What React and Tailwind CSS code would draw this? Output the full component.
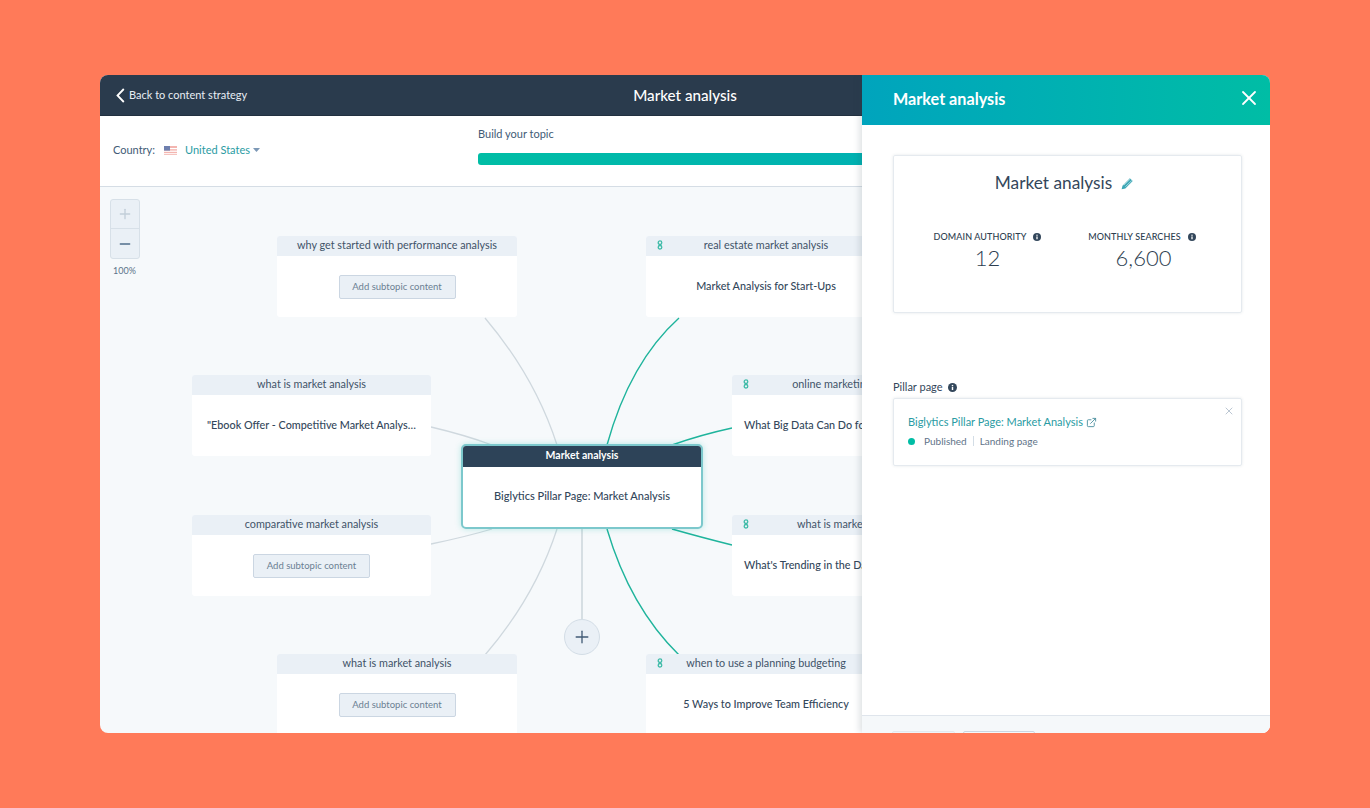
import React from "react";
import { X, Plus, Minus, ExternalLink } from "lucide-react";

const nodes = [
  { x: 177, y: 49, w: 240, title: "why get started with performance analysis", add: true },
  { x: 546, y: 49, w: 240, title: "real estate market analysis", body: "Market Analysis for Start-Ups", link: true },
  { x: 92, y: 188, w: 239, title: "what is market analysis", body: "\"Ebook Offer - Competitive Market Analys…" },
  { x: 632, y: 188, w: 239, title: "online marketing analysis", body: "What Big Data Can Do for You", link: true, start: true },
  { x: 92, y: 328, w: 239, title: "comparative market analysis", add: true },
  { x: 632, y: 328, w: 239, title: "what is market analysis", body: "What's Trending in the Data", link: true, start: true },
  { x: 177, y: 467, w: 240, title: "what is market analysis", add: true },
  { x: 546, y: 467, w: 240, title: "when to use a planning budgeting", body: "5 Ways to Improve Team Efficiency", link: true },
];

function LinkGlyph() {
  return (
    <svg width="6" height="10" viewBox="0 0 6 10" fill="none" stroke="#3fbba8" strokeWidth="1.3">
      <circle cx="3" cy="2.7" r="1.8" />
      <circle cx="3" cy="7.3" r="1.8" />
    </svg>
  );
}

function Info({ size = 9 }) {
  return (
    <svg width={size} height={size} viewBox="0 0 10 10" className="shrink-0">
      <circle cx="5" cy="5" r="5" fill="#33475b" />
      <rect x="4.2" y="4.3" width="1.6" height="3.5" fill="#fff" />
      <rect x="4.2" y="2.1" width="1.6" height="1.4" fill="#fff" />
    </svg>
  );
}

function Node({ n }) {
  return (
    <div className="absolute rounded-[3px] bg-white overflow-hidden" style={{ left: n.x, top: n.y, width: n.w, height: 81 }}>
      <div className="relative h-[20px] pb-[1px] bg-[#eaf0f6] flex items-center justify-center text-[10.8px] text-[#3f5368]">
        {n.link && (
          <span className="absolute left-[11px] top-[4px] flex">
            <LinkGlyph />
          </span>
        )}
        <span className="whitespace-nowrap">{n.title}</span>
      </div>
      <div className={n.start ? "h-[61px] flex items-center justify-start pl-[12px]" : "h-[61px] flex items-center justify-center"}>
        {n.add ? (
          <button className="h-[24px] w-[117px] pt-[1px] rounded-[2px] border border-[#cbd6e2] bg-[#eaf0f6] text-[9.5px] text-[#6b7f93]">
            Add subtopic content
          </button>
        ) : (
          <span className="whitespace-nowrap text-[10.8px] font-medium text-[#33475b]">{n.body}</span>
        )}
      </div>
    </div>
  );
}

export default function App() {
  return (
    <div className="h-[808px] w-full bg-[#ff7a59] flex items-center justify-center" style={{ fontFamily: "Lato, 'Noto Sans', sans-serif" }}>
      <div className="relative w-[1170px] h-[658px] rounded-[8px] overflow-hidden bg-[#f6f9fb] flex flex-col">
        <header className="relative h-[41px] shrink-0 bg-[#2a3b4d] flex items-center border-b border-[#22303f] text-white">
          <svg width="9" height="15" viewBox="0 0 9 15" fill="none" stroke="#fff" strokeWidth="1.8" className="ml-[16px]">
            <path d="M7.8 1 1.5 7.5 7.8 14" />
          </svg>
          <span className="ml-[4px] text-[11px] text-[#e8eef4]">Back to content strategy</span>
          <span className="absolute left-0 right-0 text-center text-[15.2px] font-medium">Market analysis</span>
        </header>

        <div className="h-[71px] shrink-0 bg-white border-b border-[#d5dde5] flex">
          <div className="w-[378px] shrink-0 pl-[13px] pb-[2px] flex items-center text-[11px]">
            <span className="text-[#425b76]">Country:</span>
            <svg width="13" height="9" viewBox="0 0 13 9" className="ml-[9px]">
              <rect width="13" height="9" fill="#f3b5b0" />
              <rect y="2" width="13" height="1.2" fill="#fff" />
              <rect y="4.6" width="13" height="1.2" fill="#fff" />
              <rect y="7.2" width="13" height="1" fill="#fff" />
              <rect width="6" height="4.6" fill="#6e7fae" />
            </svg>
            <span className="ml-[8px] text-[#2a9ba3]">United States</span>
            <svg width="7" height="4" viewBox="0 0 7 4" className="ml-[3px]">
              <path d="M0 0h7L3.5 4z" fill="#7c98b6" />
            </svg>
          </div>
          <div className="flex-1 pt-[11px]">
            <div className="text-[11px] leading-[14px] text-[#425b76]">Build your topic</div>
            <div className="mt-[12px] h-[12px] rounded-l-[3px] bg-gradient-to-r from-[#00bda5] to-[#00a4bd]" />
          </div>
        </div>

        <div className="relative flex-1">
          <svg className="absolute left-0 top-0" width="1170" height="547" fill="none">
            <g stroke="#cfd8de" strokeWidth="1.3">
              <path d="M385 131 Q435 190 457 258" />
              <path d="M331 240 Q365 248 392 258" />
              <path d="M331 357 Q365 350 392 342" />
              <path d="M457 342 Q435 410 385 468" />
              <path d="M482 342 V432" strokeWidth="1.6" />
            </g>
            <g stroke="#1fb49c" strokeWidth="1.4">
              <path d="M579 131 Q530 175 507 258" />
              <path d="M632 241 Q600 248 572 258" />
              <path d="M632 358 Q600 350 572 342" />
              <path d="M507 342 Q530 420 579 468" />
            </g>
          </svg>

          <div className="absolute left-[10px] top-[12px] w-[30px] flex flex-col items-center">
            <div className="w-[30px] rounded-[3px] border border-[#d7e0e8] bg-[#eaf0f6] flex flex-col">
              <div className="h-[29px] flex items-center justify-center border-b border-[#d7e0e8]">
                <Plus size={16} className="text-[#c2ced9]" />
              </div>
              <div className="h-[29px] flex items-center justify-center">
                <Minus size={16} strokeWidth={2.2} className="text-[#506e8c]" />
              </div>
            </div>
            <span className="mt-[5px] text-[9px] text-[#5c738a] -ml-[1px]">100%</span>
          </div>

          {nodes.map((n, i) => (
            <Node key={i} n={n} />
          ))}

          <div className="absolute left-[361px] top-[257px] w-[242px] h-[85px] rounded-[5px] border-2 border-[#7cc8cc] overflow-hidden bg-white shadow-[0_0_6px_rgba(0,189,165,0.25)]">
            <div className="h-[21px] pb-[1px] bg-[#2d4358] text-white text-[10.5px] font-bold flex items-center justify-center">Market analysis</div>
            <div className="h-[60px] pb-[2px] flex items-center justify-center text-[11px] font-medium text-[#33475b]">Biglytics Pillar Page: Market Analysis</div>
          </div>

          <div className="absolute left-[464px] top-[432px] w-[36px] h-[36px] rounded-full bg-[#eaf0f6] border border-[#d3dde6] flex items-center justify-center">
            <Plus size={20} strokeWidth={1.6} className="text-[#425b76]" />
          </div>
        </div>

        <aside className="absolute right-0 top-0 bottom-0 w-[408px] bg-white flex flex-col shadow-[-3px_0_6px_rgba(45,62,80,0.14)]">
          <div className="h-[50px] shrink-0 bg-gradient-to-r from-[#00a4bd] to-[#00bda5] flex items-center justify-between pl-[31px] pr-[9px] text-white">
            <span className="text-[16.2px] font-bold -mt-[2px]">Market analysis</span>
            <X size={24} strokeWidth={1.8} className="-mt-[4px]" />
          </div>
          <div className="flex-1 px-[31px] pt-[30px]">
            <div className="w-[349px] h-[158px] rounded-[2px] border border-[#e5eaef] shadow-[0_0_3px_rgba(45,62,80,0.12)] flex flex-col items-center">
              <div className="mt-[17px] -ml-[6px] flex items-center text-[#33475b] text-[17.3px] leading-[20px]">
                <span>Market analysis</span>
                <svg width="13" height="13" viewBox="0 0 12 12" className="ml-[9px]">
                  <path d="M0.6 11.4 1.4 8 8.2 1.2l2.6 2.6L4 10.6z" fill="#3aa6b5" />
                  <path d="M2.6 7.6 8.6 1.8M4 9 10 3.2" stroke="#fff" strokeWidth="0.5" />
                </svg>
              </div>
              <div className="mt-[38px] w-full flex text-[#2d3e50]">
                <div className="ml-[40px] w-[107px] flex flex-col items-center">
                  <div className="flex items-center gap-[7px] text-[9px] tracking-[0.1px] leading-[12px] whitespace-nowrap font-medium">
                    <span>DOMAIN AUTHORITY</span> <Info size={8} />
                  </div>
                  <div className="mt-[2px] text-[22px] leading-[26px] font-light">12</div>
                </div>
                <div className="ml-[47px] w-[108px] flex flex-col items-center">
                  <div className="flex items-center gap-[7px] text-[9px] tracking-[0.1px] leading-[12px] whitespace-nowrap font-medium">
                    <span>MONTHLY SEARCHES</span> <Info size={8} />
                  </div>
                  <div className="mt-[2px] ml-[3px] text-[22px] leading-[26px] font-light">6,600</div>
                </div>
              </div>
            </div>

            <div className="mt-[67px] flex items-center gap-[5px] text-[11px] leading-[14px] text-[#33475b]">
              <span>Pillar page</span> <Info size={9} />
            </div>
            <div className="relative mt-[4px] w-[349px] h-[68px] rounded-[2px] border border-[#e5eaef] shadow-[0_0_3px_rgba(45,62,80,0.12)] pl-[14px] pt-[16px]">
              <X size={12} strokeWidth={1.6} className="absolute right-[6px] top-[6px] text-[#a9b8c6]" />
              <div className="flex items-center text-[11px] leading-[14px] text-[#2a9ba3]">
                <span>Biglytics Pillar Page: Market Analysis</span>
                <ExternalLink size={11} className="ml-[3px] text-[#4c8f9f]" />
              </div>
              <div className="mt-[6px] flex items-center text-[10px] leading-[12px] text-[#5f7489]">
                <span className="w-[7px] h-[7px] rounded-full bg-[#00bda5]" />
                <span className="ml-[9px]">Published</span>
                <span className="mx-[6px] w-px h-[10px] bg-[#d3dde6]" />
                <span>Landing page</span>
              </div>
            </div>
          </div>
          <div className="h-[18px] shrink-0 border-t border-[#dfe5ec] bg-[#f5f8fa] flex items-start pl-[30px] pt-[15px]">
            <div className="w-[63px] h-[10px] rounded-t-[2px] border border-[#e3e9ef] bg-[#f0f4f8]" />
            <div className="ml-[8px] w-[72px] h-[10px] rounded-t-[2px] border border-[#cbd6e2] bg-[#f5f8fa]" />
          </div>
        </aside>
      </div>
    </div>
  );
}
